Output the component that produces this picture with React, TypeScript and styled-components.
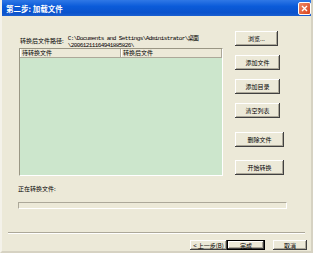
import styled, { createGlobalStyle } from 'styled-components';

const GlobalStyle = createGlobalStyle`
  html, body {
    margin: 0;
    padding: 0;
    background: #fff;
  }
  body {
    font-family: "Noto Sans CJK SC", "Noto Sans", sans-serif;
  }
`;

const Window = styled.div`
  width: 313px;
  height: 253px;
  box-sizing: border-box;
  display: flex;
  flex-direction: column;
  background: #ece9d8;
  border-left: 2px solid #f4f2ea;
  border-right: 2px solid #d6d2c2;
  border-bottom: 2px solid #d6d2c2;
  overflow: hidden;
`;

const TitleBar = styled.div`
  height: 16px;
  margin: 0 -2px;
  display: flex;
  align-items: center;
  justify-content: space-between;
  padding: 0 2px 0 6px;
  background: linear-gradient(#2f78e6 0%, #0b5bd9 40%, #0a52cc 80%, #1a5fd0 100%);
  color: #fff;
  font-size: 7.5px;
  font-weight: bold;
  flex-shrink: 0;
`;

const CloseButton = styled.div`
  width: 11px;
  height: 11px;
  border: 1px solid #fff;
  border-radius: 2px;
  background: linear-gradient(135deg, #f08a64, #d9431e);
  display: flex;
  align-items: center;
  justify-content: center;
`;

const Content = styled.div`
  display: grid;
  grid-template-columns: 204px 1fr;
  padding-left: 17px;
`;

const LeftPane = styled.div`
  display: flex;
  flex-direction: column;
  padding-top: 19px;
`;

const PathRow = styled.div`
  height: 13px;
  display: flex;
  align-items: flex-start;
  gap: 4px;
  padding-left: 1px;
`;

const Label = styled.span`
  font-size: 6px;
  line-height: 8px;
  margin-top: 2px;
  color: #000;
  white-space: nowrap;
`;

const PathText = styled.div`
  font-family: "Liberation Mono", "Noto Sans CJK SC", monospace;
  font-size: 6px;
  letter-spacing: -0.6px;
  line-height: 7px;
  color: #000;
  white-space: nowrap;
`;

const FileList = styled.div`
  height: 128px;
  box-sizing: border-box;
  background: #cce6cc;
  border-top: 1px solid #9a9684;
  border-left: 1px solid #9a9684;
  border-right: 1px solid #fff;
  border-bottom: 1px solid #fff;
  display: flex;
  flex-direction: column;
`;

const ListHeader = styled.div`
  height: 8px;
  display: grid;
  grid-template-columns: 101px 1fr;
  background: #ece9d8;
  border-bottom: 1px solid #aca899;
`;

const HeaderCell = styled.div`
  font-size: 6px;
  line-height: 8px;
  padding-left: 2px;
  border-right: 1px solid #aca899;
  box-shadow: inset 1px 0 0 #fff;
  white-space: nowrap;
  overflow: hidden;
`;

const RightPane = styled.div`
  display: flex;
  flex-direction: column;
  align-items: flex-start;
  padding: 15px 0 0 12px;
`;

const Button = styled.button<{ $top?: number; $w?: number; $h?: number; $default?: boolean }>`
  margin-top: ${p => p.$top ?? 0}px;
  width: ${p => p.$w ?? 45}px;
  height: ${p => p.$h ?? 15}px;
  padding: 0;
  font-family: "Noto Sans CJK SC", "Noto Sans", sans-serif;
  font-size: 6px;
  color: #000;
  background: #ece9d8;
  border: ${p => (p.$default ? '1px solid #000' : 'none')};
  box-shadow: inset -1px -1px 0 #404040, inset 1px 1px 0 #fff, inset -2px -2px 0 #aca899;
  display: flex;
  align-items: center;
  justify-content: center;
  white-space: nowrap;
`;

const StatusLabel = styled.div`
  font-size: 6px;
  line-height: 8px;
  margin: 9px 0 0 16px;
`;

const ProgressBar = styled.div`
  margin: 9px 0 0 16px;
  width: 269px;
  height: 7px;
  box-sizing: border-box;
  border-top: 1px solid #aca899;
  border-left: 1px solid #aca899;
  border-right: 1px solid #fff;
  border-bottom: 1px solid #fff;
`;

const Separator = styled.div`
  margin: 23px 0 0 6px;
  width: 297px;
  height: 0;
  border-top: 1px solid #aca899;
  border-bottom: 1px solid #fff;
`;

const Footer = styled.div`
  display: flex;
  justify-content: flex-end;
  align-items: center;
  padding: 6px 4px 0 0;
`;

const FooterGroup = styled.div`
  display: flex;
  margin-right: 8px;
`;

export default function App() {
  return (
    <>
      <GlobalStyle />
      <Window>
        <TitleBar>
          <span>第二步: 加载文件</span>
          <CloseButton>
            <svg width="7" height="7" viewBox="0 0 7 7">
              <path d="M1 1 L6 6 M6 1 L1 6" stroke="#fff" strokeWidth="1.4" />
            </svg>
          </CloseButton>
        </TitleBar>
        <Content>
          <LeftPane>
            <PathRow>
              <Label>转换后文件路径:</Label>
              <PathText>
                C:\Documents and Settings\Administrator\桌面
                <br />
                \20061211164941885826\
              </PathText>
            </PathRow>
            <FileList>
              <ListHeader>
                <HeaderCell>待转换文件</HeaderCell>
                <HeaderCell>转换后文件</HeaderCell>
              </ListHeader>
            </FileList>
          </LeftPane>
          <RightPane>
            <Button $w={43}>浏览...</Button>
            <Button $top={9}>添加文件</Button>
            <Button $top={9}>添加目录</Button>
            <Button $top={9}>清空列表</Button>
            <Button $top={14} $w={49}>删除文件</Button>
            <Button $top={13} $w={49}>开始转换</Button>
          </RightPane>
        </Content>
        <StatusLabel>正在转换文件:</StatusLabel>
        <ProgressBar />
        <Separator />
        <Footer>
          <FooterGroup>
            <Button $w={37} $h={10}>&lt; 上一步(B)</Button>
            <Button $w={38} $h={10} $default>完成</Button>
          </FooterGroup>
          <Button $w={34} $h={10}>取消</Button>
        </Footer>
      </Window>
    </>
  );
}
